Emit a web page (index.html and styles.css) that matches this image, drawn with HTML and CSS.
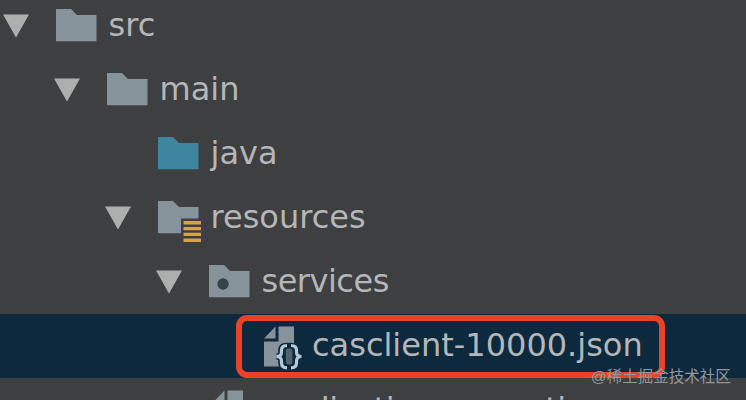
FILE: index.html
```
<!DOCTYPE html>
<html lang="en">
<head>
    <meta charset="UTF-8">
    <meta name="viewport" content="width=device-width, initial-scale=1.0">
    <title>Project Tree</title>
    <link rel="stylesheet" href="styles.css">
</head>
<body>

    <!-- Shared icon shapes -->
    <svg class="icon-defs" width="0" height="0">
        <symbol id="arrow" viewBox="0 0 26 24">
            <path d="M0 .5H26L13 23.5Z"/>
        </symbol>
        <symbol id="folder" viewBox="0 0 48 48">
            <path d="M0 7H15L21 13H40.5V39.3H0Z"/>
        </symbol>
        <symbol id="file" viewBox="0 0 48 48">
            <path d="M0 16.5L11.5 4.5V16.5Z"/>
            <path d="M14.5 4.5H30V44.5H0V19.5H14.5Z"/>
        </symbol>
    </svg>

    <div class="tree">
        <div class="row level-0">
            <svg class="arrow"><use href="#arrow"/></svg>
            <svg class="icon"><use href="#folder"/></svg>
            <span class="label">src</span>
        </div>
        <div class="row level-1">
            <svg class="arrow"><use href="#arrow"/></svg>
            <svg class="icon"><use href="#folder"/></svg>
            <span class="label">main</span>
        </div>
        <div class="row level-2">
            <span class="arrow"></span>
            <svg class="icon source"><use href="#folder"/></svg>
            <span class="label">java</span>
        </div>
        <div class="row level-2">
            <svg class="arrow"><use href="#arrow"/></svg>
            <svg class="icon" viewBox="0 0 48 48">
                <path d="M0 7H15L21 13H40.5V24.5H23V39.3H0Z"/>
                <path class="bars" d="M25.5 27H43V30.5H25.5ZM25.5 33H43V36.3H25.5ZM25.5 38.8H43V42H25.5ZM25.5 44.5H43V48H25.5Z"/>
            </svg>
            <span class="label">resources</span>
        </div>
        <div class="row level-3">
            <svg class="arrow"><use href="#arrow"/></svg>
            <svg class="icon" viewBox="0 0 48 48">
                <path d="M0 7H15L21 13H40.5V39.3H0Z"/>
                <circle class="dot" cx="14" cy="26" r="5.7"/>
            </svg>
            <span class="label tight">services</span>
        </div>
        <div class="row level-4 selected">
            <span class="arrow"></span>
            <svg class="icon" viewBox="0 0 48 48">
                <use href="#file"/>
                <path class="brace-gap" d="M22.5 24C19 24 17.5 25 17.5 28V30C17.5 33 16 34.5 12.5 34.5C16 34.5 17.5 36 17.5 39V41C17.5 44 19 45.3 22.5 45.3H27.5C31 45.3 32.5 44 32.5 41V39C32.5 36 34 34.5 37.5 34.5C34 34.5 32.5 33 32.5 30V28C32.5 25 31 24 27.5 24Z"/>
                <rect class="brace-core" x="21.8" y="26.5" width="6.6" height="16" rx="2.5"/>
                <path class="brace" d="M23 23.5C19 23.5 17.5 25 17.5 28V30C17.5 33 16 34.500 12.500 34.500C16 34.500 17.500 36 17.500 39V41C17.500 44 19 45.800 23 45.800"/>
                <path class="brace" d="M27 23.500C31 23.500 32.500 25 32.500 28V30C32.500 33 34 34.500 37.500 34.500C34 34.500 32.500 36 32.500 39V41C32.500 44 31 45.800 27 45.800"/>
            </svg>
            <span class="label">casclient-10000.json</span>
            <div class="highlight"></div>
        </div>
        <div class="row level-3 last">
            <span class="arrow"></span>
            <svg class="icon"><use href="#file"/></svg>
            <span class="label tight">application.properties</span>
        </div>
    </div>

    <div class="watermark">@稀土掘金技术社区</div>

</body>
</html>
```
FILE: styles.css
```
* {
    margin: 0;
    padding: 0;
    box-sizing: border-box;
}

:root {
    --background: #3d3f41;
    --selected: #0d293e;
    --text: #b4b6b8;
    --icon: #87939a;
    --highlight: #ea4226;
}

body {
    width: 746px;
    height: 400px;
    overflow: hidden;
    position: relative;
    background-color: var(--background);
    color: var(--text);
    font-family: "DejaVu Sans", sans-serif;
    font-size: 32px;
}

.icon-defs {
    display: block;
}

/* Tree rows */
.tree {
    height: 406px;
    margin-top: -6px;
    overflow: hidden;
}

.row {
    display: flex;
    align-items: center;
    position: relative;
    height: 64px;
    padding-left: 3px;
}

.level-1 { padding-left: 54px; }
.level-2 { padding-left: 105px; }
.level-3 { padding-left: 156px; }
.level-4 { padding-left: 208px; }

.selected {
    background-color: var(--selected);
}

.arrow {
    flex: none;
    width: 26px;
    height: 24px;
    margin-right: 26.5px;
    fill: #adafaf;
}

.icon {
    flex: none;
    width: 48px;
    height: 48px;
    margin-right: 5px;
    fill: var(--icon);
    overflow: visible;
}

.source { fill: #3e86a0; }
.bars { fill: #d9a343; }
.dot { fill: #35424b; }

.selected .arrow {
    margin-right: 30px;
}

.selected .icon {
    margin-right: 0;
}

.last .arrow {
    margin-right: 31px;
}

.last .icon {
    margin-right: 1px;
}

.brace-gap {
    fill: var(--selected);
    stroke: var(--selected);
    stroke-width: 6.5;
}

.brace {
    fill: none;
    stroke: #b4c8d5;
    stroke-width: 3.2;
}

.brace-core {
    fill: #51646f;
}

.label {
    line-height: 62px;
    height: 64px;
    white-space: nowrap;
}

.tight {
    letter-spacing: -0.5px;
}

/* Red frame around the selected file */
.highlight {
    position: absolute;
    left: 236px;
    top: 1px;
    width: 429px;
    height: 63px;
    border: 6px solid var(--highlight);
    border-radius: 11px;
}

.watermark {
    position: absolute;
    left: 591px;
    top: 367px;
    color: #92979b;
    font-family: "Liberation Sans", "Noto Sans CJK SC", sans-serif;
    font-size: 15.5px;
    line-height: 20px;
    white-space: nowrap;
}
```
